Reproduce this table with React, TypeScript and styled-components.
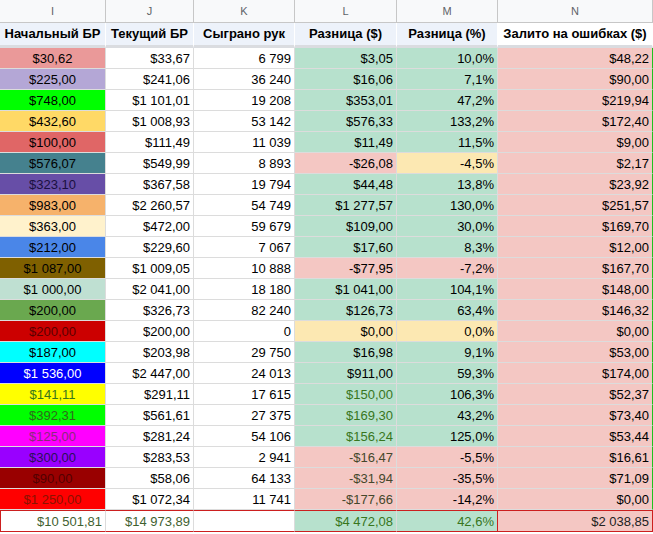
import React from "react";
import styled, { createGlobalStyle } from "styled-components";

const GlobalStyle = createGlobalStyle`
  html, body {
    margin: 0;
    padding: 0;
    background: #ffffff;
  }
  body {
    font-family: "Liberation Sans", Arial, sans-serif;
  }
`;

type Tone = "pos" | "neg" | "zero";

type Row = {
  start: string;
  startBg: string;
  startColor?: string;
  current: string;
  hands: string;
  diff: string;
  diffTone: Tone;
  diffColor?: string;
  pct: string;
  pctTone: Tone;
  leaked: string;
};

const TONES: Record<Tone, string> = {
  pos: "#b7e1cd",
  neg: "#f4c7c3",
  zero: "#fce8b2",
};

const ROWS: Row[] = [
  { start: "$30,62", startBg: "#ea9999", current: "$33,67", hands: "6 799", diff: "$3,05", diffTone: "pos", pct: "10,0%", pctTone: "pos", leaked: "$48,22" },
  { start: "$225,00", startBg: "#b4a7d6", current: "$241,06", hands: "36 240", diff: "$16,06", diffTone: "pos", pct: "7,1%", pctTone: "pos", leaked: "$90,00" },
  { start: "$748,00", startBg: "#00ff00", current: "$1 101,01", hands: "19 208", diff: "$353,01", diffTone: "pos", pct: "47,2%", pctTone: "pos", leaked: "$219,94" },
  { start: "$432,60", startBg: "#ffd966", current: "$1 008,93", hands: "53 142", diff: "$576,33", diffTone: "pos", pct: "133,2%", pctTone: "pos", leaked: "$172,40" },
  { start: "$100,00", startBg: "#e06666", current: "$111,49", hands: "11 039", diff: "$11,49", diffTone: "pos", pct: "11,5%", pctTone: "pos", leaked: "$9,00" },
  { start: "$576,07", startBg: "#45818e", current: "$549,99", hands: "8 893", diff: "-$26,08", diffTone: "neg", pct: "-4,5%", pctTone: "zero", leaked: "$2,17" },
  { start: "$323,10", startBg: "#674ea7", startColor: "#1a1040", current: "$367,58", hands: "19 794", diff: "$44,48", diffTone: "pos", pct: "13,8%", pctTone: "pos", leaked: "$23,92" },
  { start: "$983,00", startBg: "#f6b26b", current: "$2 260,57", hands: "54 749", diff: "$1 277,57", diffTone: "pos", pct: "130,0%", pctTone: "pos", leaked: "$251,57" },
  { start: "$363,00", startBg: "#fff2cc", current: "$472,00", hands: "59 679", diff: "$109,00", diffTone: "pos", pct: "30,0%", pctTone: "pos", leaked: "$169,70" },
  { start: "$212,00", startBg: "#4a86e8", current: "$229,60", hands: "7 067", diff: "$17,60", diffTone: "pos", pct: "8,3%", pctTone: "pos", leaked: "$12,00" },
  { start: "$1 087,00", startBg: "#7f6000", current: "$1 009,05", hands: "10 888", diff: "-$77,95", diffTone: "neg", pct: "-7,2%", pctTone: "neg", leaked: "$167,70" },
  { start: "$1 000,00", startBg: "#bfe0d2", current: "$2 041,00", hands: "18 180", diff: "$1 041,00", diffTone: "pos", pct: "104,1%", pctTone: "pos", leaked: "$148,00" },
  { start: "$200,00", startBg: "#6aa84f", current: "$326,73", hands: "82 240", diff: "$126,73", diffTone: "pos", pct: "63,4%", pctTone: "pos", leaked: "$146,32" },
  { start: "$200,00", startBg: "#cc0000", startColor: "#5a0000", current: "$200,00", hands: "0", diff: "$0,00", diffTone: "zero", pct: "0,0%", pctTone: "zero", leaked: "$0,00" },
  { start: "$187,00", startBg: "#00ffff", current: "$203,98", hands: "29 750", diff: "$16,98", diffTone: "pos", pct: "9,1%", pctTone: "pos", leaked: "$53,00" },
  { start: "$1 536,00", startBg: "#0000ff", startColor: "#ffffff", current: "$2 447,00", hands: "24 013", diff: "$911,00", diffTone: "pos", pct: "59,3%", pctTone: "pos", leaked: "$174,00" },
  { start: "$141,11", startBg: "#ffff00", startColor: "#38761d", current: "$291,11", hands: "17 615", diff: "$150,00", diffTone: "pos", diffColor: "#38761d", pct: "106,3%", pctTone: "pos", leaked: "$52,37" },
  { start: "$392,31", startBg: "#00ff00", startColor: "#2f6a1a", current: "$561,61", hands: "27 375", diff: "$169,30", diffTone: "pos", diffColor: "#38761d", pct: "43,2%", pctTone: "pos", leaked: "$73,40" },
  { start: "$125,00", startBg: "#ff00ff", startColor: "#8a2a7a", current: "$281,24", hands: "54 106", diff: "$156,24", diffTone: "pos", diffColor: "#38761d", pct: "125,0%", pctTone: "pos", leaked: "$53,44" },
  { start: "$300,00", startBg: "#9900ff", startColor: "#2a0f5a", current: "$283,53", hands: "2 941", diff: "-$16,47", diffTone: "neg", diffColor: "#45472c", pct: "-5,5%", pctTone: "neg", leaked: "$16,61" },
  { start: "$90,00", startBg: "#990000", startColor: "#520000", current: "$58,06", hands: "64 133", diff: "-$31,94", diffTone: "neg", diffColor: "#45472c", pct: "-35,5%", pctTone: "neg", leaked: "$71,09" },
  { start: "$1 250,00", startBg: "#ff0000", startColor: "#8a1200", current: "$1 072,34", hands: "11 741", diff: "-$177,66", diffTone: "neg", diffColor: "#45472c", pct: "-14,2%", pctTone: "neg", leaked: "$0,00" },
];

const Sheet = styled.div`
  display: grid;
  grid-template-columns: 106px 88px 101px 102px 101px 155px;
  width: 653px;
  font-size: 13px;
  color: #000000;
`;

const ColumnLetter = styled.div`
  height: 23px;
  box-sizing: border-box;
  display: flex;
  align-items: center;
  justify-content: center;
  background: #f8f9fa;
  border-right: 1px solid #c7c7c7;
  border-bottom: 1px solid #c7c7c7;
  color: #5f6368;
  font-family: "Liberation Sans", Arial, sans-serif;
  font-size: 11px;
`;

const HeaderCell = styled.div<{ $plain?: boolean }>`
  height: 25px;
  box-sizing: border-box;
  display: flex;
  align-items: center;
  justify-content: center;
  padding-bottom: 2px;
  background: ${(p) => (p.$plain ? "#ffffff" : "#edf2fa")};
  border-right: 1px solid #ffffff;
  border-bottom: 3px solid #dadce0;
  font-weight: bold;
  white-space: nowrap;
`;

const Cell = styled.div<{ $bg?: string; $color?: string; $center?: boolean; $edge?: boolean }>`
  height: 21px;
  box-sizing: border-box;
  display: flex;
  align-items: center;
  justify-content: ${(p) => (p.$center ? "center" : "flex-end")};
  padding: 0 3px 0 3px;
  background: ${(p) => p.$bg ?? "#ffffff"};
  color: ${(p) => p.$color ?? "#000000"};
  border-right: 1px solid ${(p) => (p.$edge ? "#1fc21f" : "#dcdcdc")};
  border-bottom: 1px solid #dcdcdc;
  white-space: nowrap;
`;

const TotalCell = styled.div<{ $bg?: string; $color?: string; $redLeft?: boolean; $redRight?: boolean }>`
  height: 22px;
  box-sizing: border-box;
  display: flex;
  align-items: center;
  justify-content: flex-end;
  padding: 0 3px;
  background: ${(p) => p.$bg ?? "#ffffff"};
  color: ${(p) => p.$color ?? "#000000"};
  border-top: 1px solid #cc1f1f;
  border-bottom: 1px solid #cc1f1f;
  border-left: ${(p) => (p.$redLeft ? "1px solid #cc1f1f" : "none")};
  border-right: 1px solid ${(p) => (p.$redRight ? "#cc1f1f" : "#dcdcdc")};
  white-space: nowrap;
`;

const LETTERS = ["I", "J", "K", "L", "M", "N"];
const TITLES = [
  "Начальный БР",
  "Текущий БР",
  "Сыграно рук",
  "Разница ($)",
  "Разница (%)",
  "Залито на ошибках ($)",
];

export default function App() {
  return (
    <>
      <GlobalStyle />
      <Sheet>
        {LETTERS.map((l) => (
          <ColumnLetter key={l}>{l}</ColumnLetter>
        ))}
        {TITLES.map((t, i) => (
          <HeaderCell key={t} $plain={i === 5}>
            {t}
          </HeaderCell>
        ))}
        {ROWS.map((r, i) => (
          <React.Fragment key={i}>
            <Cell $bg={r.startBg} $color={r.startColor} $center>
              {r.start}
            </Cell>
            <Cell>{r.current}</Cell>
            <Cell>{r.hands}</Cell>
            <Cell $bg={TONES[r.diffTone]} $color={r.diffColor}>
              {r.diff}
            </Cell>
            <Cell $bg={TONES[r.pctTone]}>{r.pct}</Cell>
            <Cell $bg={TONES.neg} $edge>
              {r.leaked}
            </Cell>
          </React.Fragment>
        ))}
        <TotalCell $color="#3f6130" $redLeft>
          $10 501,81
        </TotalCell>
        <TotalCell $color="#3f6130">$14 973,89</TotalCell>
        <TotalCell />
        <TotalCell $bg={TONES.pos} $color="#38761d">
          $4 472,08
        </TotalCell>
        <TotalCell $bg={TONES.pos} $color="#38761d" $redRight>
          42,6%
        </TotalCell>
        <TotalCell $bg={TONES.neg} $color="#222222" $redRight>
          $2 038,85
        </TotalCell>
      </Sheet>
    </>
  );
}
